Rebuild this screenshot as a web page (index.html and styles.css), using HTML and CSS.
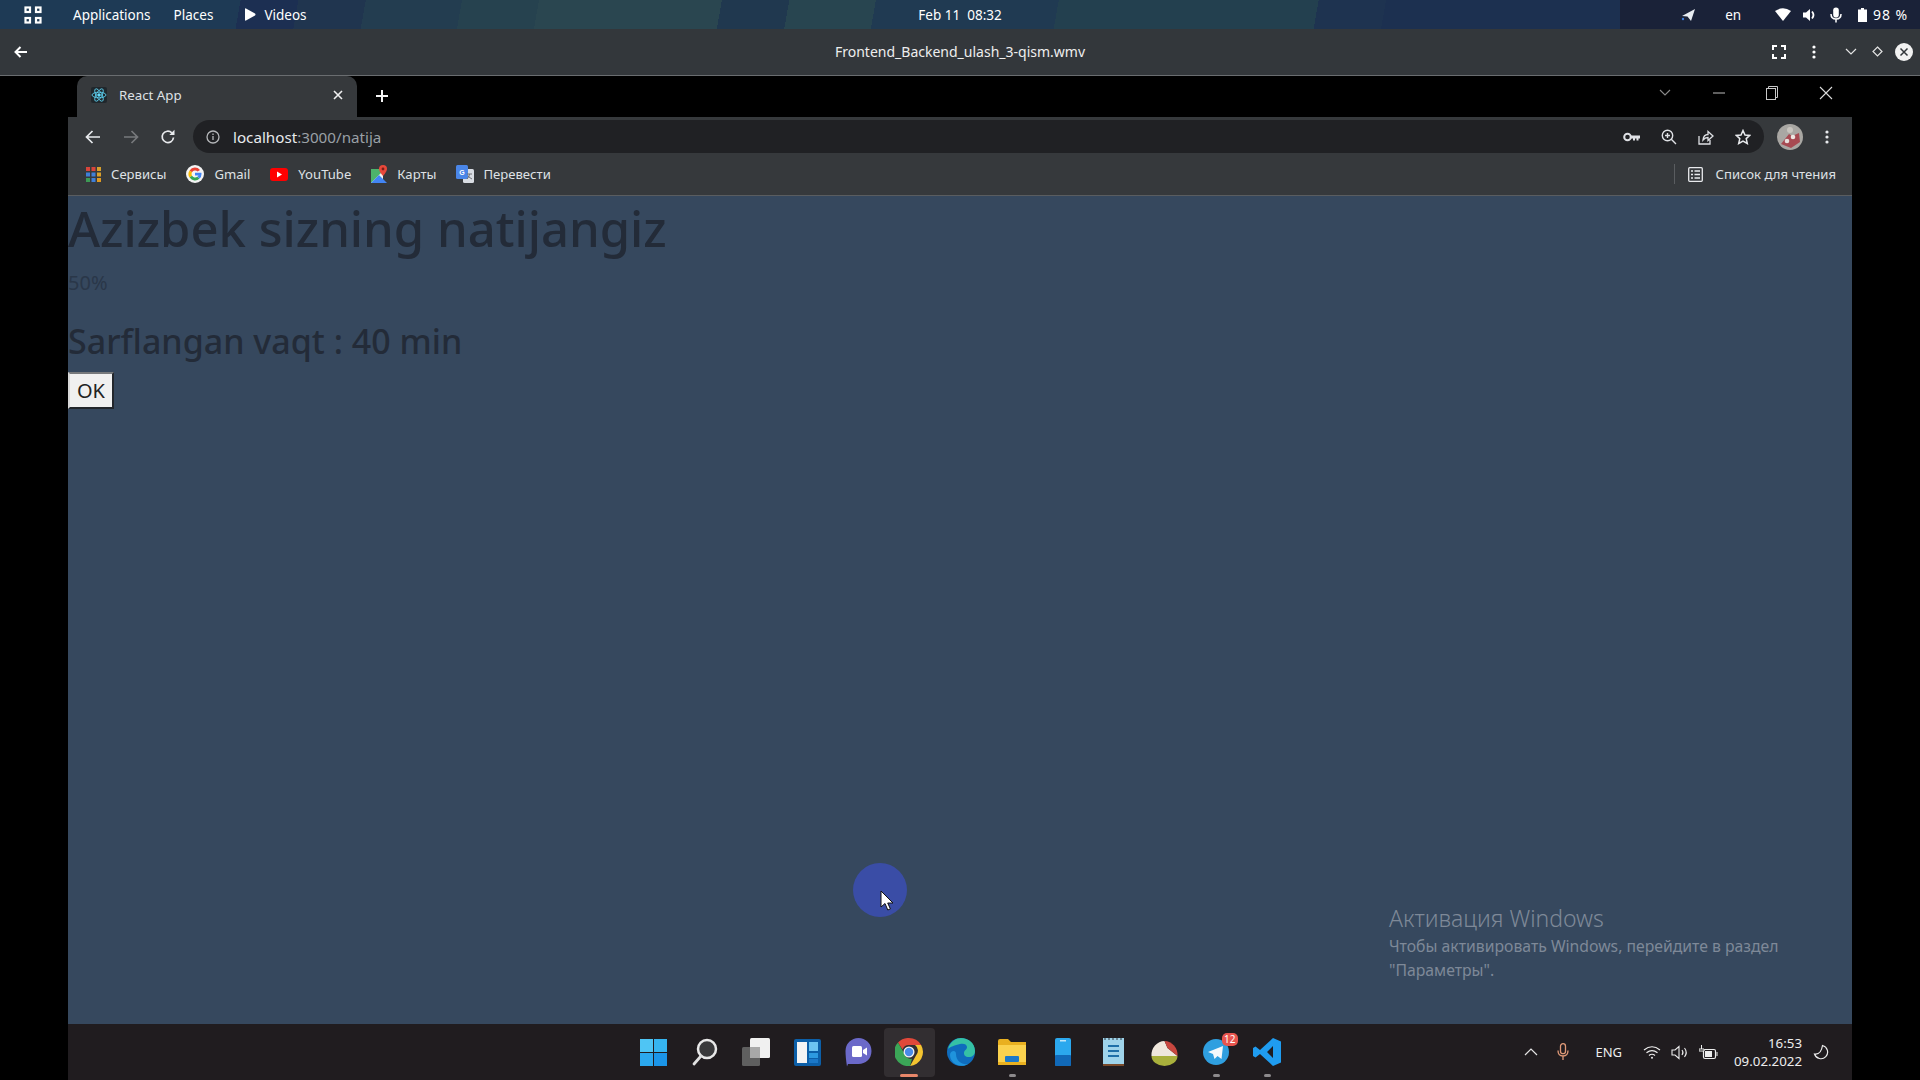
FILE: index.html
```html
<!DOCTYPE html>
<html lang="en">

<head>
    <meta charset="UTF-8">
    <meta name="viewport" content="width=device-width, initial-scale=1.0">
    <title>React App</title>
    <link rel="stylesheet" href="styles.css">
</head>

<body>
    <!-- gnome top bar -->
    <div class="topbar">
        <div class="top-left">
            <svg class="top-grid" width="18" height="18" viewBox="0 0 18 18" fill="none" stroke="#fff" stroke-width="2.2">
                <rect x="1.5" y="1.5" width="4.5" height="4.5" /><rect x="12" y="1.5" width="4.5" height="4.5" />
                <rect x="1.5" y="12" width="4.5" height="4.5" /><rect x="12" y="12" width="4.5" height="4.5" />
            </svg>
            <span class="top-apps">Applications</span>
            <span class="top-places">Places</span>
            <svg class="top-play" width="12" height="13" viewBox="0 0 12 13"><path d="M1 1 Q1 0 2 .4 L11 5.6 Q12 6.5 11 7.4 L2 12.6 Q1 13 1 12Z" fill="#fff" /></svg>
            <span>Videos</span>
        </div>
        <div class="top-date">Feb 11&nbsp; 08:32</div>
        <div class="top-right">
            <svg width="16" height="14" viewBox="0 0 16 14"><path d="M15 1 L11 13 L7.5 8.5 L2 8 Z" fill="#e8edf2" /><circle cx="3" cy="11" r="1.2" fill="#3d7bd8" /></svg>
            <span class="top-lang">en</span>
            <svg class="top-wifi" width="16" height="13" viewBox="0 0 16 13"><path d="M0 3 Q8 -2.5 16 3 L8 13Z" fill="#fff" /></svg>
            <svg class="top-vol" width="15" height="14" viewBox="0 0 15 14"><path d="M1 4.5h3L8 1v12L4 9.5H1Z" fill="#fff" /><path d="M10 3.5Q13 7 10 10.5" fill="none" stroke="#fff" stroke-width="1.8" /></svg>
            <svg class="top-mic" width="12" height="16" viewBox="0 0 12 16"><rect x="3.2" y="0.5" width="5.6" height="10" rx="2.8" fill="#fff" /><path d="M1 7q0 5 5 5t5-5M6 12v3.5" fill="none" stroke="#fff" stroke-width="1.5" /></svg>
            <svg class="top-batt" width="9" height="14" viewBox="0 0 9 14"><path d="M3 0h3v1.5h3V14H0V1.5h3Z" fill="#fff" /></svg>
            <span class="top-pct">98 %</span>
        </div>
    </div>

    <!-- video player header -->
    <div class="player-head">
        <svg class="player-back" width="14" height="12" viewBox="0 0 14 12" fill="none" stroke="#fff" stroke-width="2"><path d="M13 6H2M6.5 1 1.5 6l5 5" /></svg>
        <div class="player-title">Frontend_Backend_ulash_3-qism.wmv</div>
        <div class="player-tools">
            <svg class="tool-full" width="14" height="14" viewBox="0 0 14 14" fill="none" stroke="#fff" stroke-width="2"><path d="M1 5V1h4M9 1h4v4M13 9v4H9M5 13H1V9" /></svg>
            <svg class="tool-dots" width="4" height="14" viewBox="0 0 4 14" fill="#fff"><circle cx="2" cy="2" r="1.6" /><circle cx="2" cy="7" r="1.6" /><circle cx="2" cy="12" r="1.6" /></svg>
            <svg class="tool-down" width="12" height="8" viewBox="0 0 12 8" fill="none" stroke="#e4e4e4" stroke-width="1.2"><path d="M1 1l5 5 5-5" /></svg>
            <svg class="tool-diamond" width="11" height="11" viewBox="0 0 11 11" fill="none" stroke="#e4e4e4" stroke-width="1.2"><path d="M5.500 1 10 5.500 5.500 10 1 5.500Z" /></svg>
            <svg class="tool-close" width="18" height="18" viewBox="0 0 18 18"><circle cx="9" cy="9" r="9" fill="#f2f2f2" /><path d="M5.500 5.500l7 7M12.500 5.500l-7 7" stroke="#33373b" stroke-width="1.500" /></svg>
        </div>
    </div>

    <!-- the recorded windows screen -->
    <div class="stage">
        <div class="screen">
            <div class="tabstrip">
                <div class="tab">
                    <svg class="favicon" width="16" height="16" viewBox="0 0 16 16" fill="none" stroke="#61dafb" stroke-width=".8">
                        <rect width="16" height="16" rx="2" fill="#20272c" stroke="none" />
                        <ellipse cx="8" cy="8" rx="7" ry="2.800" /><ellipse cx="8" cy="8" rx="7" ry="2.800" transform="rotate(60 8 8)" /><ellipse cx="8" cy="8" rx="7" ry="2.800" transform="rotate(120 8 8)" />
                        <circle cx="8" cy="8" r="1.300" fill="#61dafb" />
                    </svg>
                    <span class="tab-title">React App</span>
                    <svg class="tab-x" width="10" height="10" viewBox="0 0 10 10" stroke="#f0f0f0" stroke-width="1.600"><path d="M1 1l8 8M9 1l-8 8" /></svg>
                </div>
                <svg class="tab-plus" width="14" height="14" viewBox="0 0 14 14" stroke="#f4f4f4" stroke-width="2"><path d="M7 1v12M1 7h12" /></svg>
                <div class="win-btns">
                    <svg width="12" height="8" viewBox="0 0 12 8" fill="none" stroke="#8a8a8a" stroke-width="1.100"><path d="M1 1l5 5 5-5" /></svg>
                    <svg class="win-min" width="12" height="2" viewBox="0 0 12 2"><path d="M0 1h12" stroke="#bdbdbd" /></svg>
                    <svg class="win-max" width="12" height="14" viewBox="0 0 12 14" fill="none" stroke="#c8c8c8"><rect x=".5" y="2.500" width="9" height="11" /><path d="M2.500 2.500V.5h9v11h-2" /></svg>
                    <svg class="win-close" width="14" height="14" viewBox="0 0 14 14" stroke="#dcdcdc" stroke-width="1.100"><path d="M1 1l12 12M13 1L1 13" /></svg>
                </div>
            </div>

            <div class="toolbar">
                <svg class="nav-back" width="16" height="14" viewBox="0 0 16 14" fill="none" stroke="#e8eaed" stroke-width="1.700"><path d="M15 7H2M7.500 1 1.500 7l6 6" /></svg>
                <svg class="nav-fwd" width="16" height="14" viewBox="0 0 16 14" fill="none" stroke="#77797c" stroke-width="1.700"><path d="M1 7h13M8.500 1l6 6-6 6" /></svg>
                <svg class="nav-reload" width="16" height="16" viewBox="0 0 16 16" fill="none" stroke="#e8eaed" stroke-width="1.700"><path d="M13.500 8.500A5.700 5.700 0 1 1 11.800 3.800" /><path d="M14.500 .8v5.200H9.300Z" fill="#e8eaed" stroke="none" /></svg>
                <div class="omnibox">
                    <svg class="omni-info" width="14" height="14" viewBox="0 0 14 14" fill="none" stroke="#b5b7ba" stroke-width="1.300"><circle cx="7" cy="7" r="6" /><path d="M7 6v4M7 3.500v1.500" /></svg>
                    <span class="omni-host">localhost</span><span class="omni-path">:3000/natija</span>
                    <div class="omni-icons">
                        <svg width="17" height="10" viewBox="0 0 17 10"><circle cx="4.500" cy="5" r="3.300" fill="none" stroke="#dfe1e5" stroke-width="2" /><path d="M8 3.500h9v3h-1.500v2h-2v-2h-1.500v2h-2v-2H8Z" fill="#dfe1e5" /></svg>
                        <svg width="16" height="16" viewBox="0 0 16 16" fill="none" stroke="#dfe1e5" stroke-width="1.400"><circle cx="6.500" cy="6.500" r="5.200" /><path d="M10.300 10.300 15 15M6.500 4v5M4 6.500h5" /></svg>
                        <svg width="16" height="16" viewBox="0 0 16 16" fill="none" stroke="#dfe1e5" stroke-width="1.300"><path d="M1 7v8h11v-4M5 11Q5.500 5.500 10 5.500V2.500l5 4.500-5 4.500v-3Q7 8.500 5 11Z" /></svg>
                        <svg width="16" height="16" viewBox="0 0 16 16" fill="none" stroke="#e8eaed" stroke-width="1.500"><path d="M8 1.500l2 4.500 4.800.4-3.600 3.200 1.100 4.800L8 12l-4.300 2.400 1.100-4.800L1.200 6.400 6 6Z" /></svg>
                    </div>
                </div>
                <svg class="avatar" width="26" height="26" viewBox="0 0 26 26"><circle cx="13" cy="13" r="13" fill="#a9a7a3" /><path d="M4 20l8-10 3 2 7-3 1 9-9 6Z" fill="#a74a52" /><circle cx="10" cy="17" r="2.300" fill="#e8dfdc" /><circle cx="16" cy="13" r="2.300" fill="#ede6e2" /><circle cx="13" cy="6" r="3" fill="#c9c5bf" /></svg>
                <svg class="menu-dots" width="4" height="14" viewBox="0 0 4 14" fill="#e8eaed"><circle cx="2" cy="2" r="1.600" /><circle cx="2" cy="7" r="1.600" /><circle cx="2" cy="12" r="1.600" /></svg>
            </div>

            <div class="bookmarks">
                <svg class="bm-icon" width="15" height="15" viewBox="0 0 15 15">
                    <rect width="4" height="4" fill="#d8453b" /><rect x="5.500" width="4" height="4" fill="#d8453b" /><rect x="11" width="4" height="4" fill="#d8a02c" />
                    <rect y="5.500" width="4" height="4" fill="#3f7fd8" /><rect x="5.500" y="5.500" width="4" height="4" fill="#3f7fd8" /><rect x="11" y="5.500" width="4" height="4" fill="#d8a02c" />
                    <rect y="11" width="4" height="4" fill="#3d9a55" /><rect x="5.500" y="11" width="4" height="4" fill="#3f7fd8" /><rect x="11" y="11" width="4" height="4" fill="#e09a22" />
                </svg>
                <span class="bm-text bm-services">Сервисы</span>
                <svg class="bm-icon" width="18" height="18" viewBox="0 0 18 18">
                    <circle cx="9" cy="9" r="9" fill="#f4f4f4" />
                    <path d="M14 5A6.500 6.500 0 0 0 3.600 5.400L6 7.200A3.600 3.600 0 0 1 11.600 6.400Z" fill="#ea4335" />
                    <path d="M3.600 5.400a6.500 6.500 0 0 0 0 7.200L6 10.800a3.600 3.600 0 0 1 0-3.600Z" fill="#fbbc05" />
                    <path d="M3.600 12.600A6.500 6.500 0 0 0 13.600 13.600L11.300 11.800A3.600 3.600 0 0 1 6 10.800Z" fill="#34a853" />
                    <path d="M15.500 9c0-.4 0-.8-.1-1.200H9v2.600h3.500q-.3 1-1.200 1.400l2.300 1.800Q15.500 12 15.500 9Z" fill="#4285f4" />
                </svg>
                <span class="bm-text bm-gmail">Gmail</span>
                <svg class="bm-icon" width="18" height="13" viewBox="0 0 18 13"><rect width="18" height="13" rx="3" fill="#f00" /><path d="M7 3.500v6l5-3Z" fill="#fff" /></svg>
                <span class="bm-text bm-yt">YouTube</span>
                <svg class="bm-icon" width="16" height="18" viewBox="0 0 16 18">
                    <path d="M0 4h12v14H0Z" fill="#4db36b" /><path d="M0 18 12 6v12Z" fill="#f2f2f2" /><path d="M0 18 8 10l8 8Z" fill="#4285f4" />
                    <path d="M12 0a4 4 0 0 1 4 4c0 2.500-4 7-4 7S8 6.500 8 4a4 4 0 0 1 4-4Z" fill="#e8483a" /><circle cx="12" cy="4" r="1.400" fill="#7c1f18" />
                </svg>
                <span class="bm-text bm-maps">Карты</span>
                <svg class="bm-icon" width="18" height="18" viewBox="0 0 18 18"><rect x="7" y="4" width="11" height="14" rx="1.500" fill="#d9dde3" /><rect width="12" height="14" rx="1.500" fill="#4a86e8" /><text class="bm-g" x="3.200" y="10">G</text><path d="M11 9h5M13.500 9q-.3 3-2.500 5M12 11q2 2 4 3" stroke="#6e7177" fill="none" /></svg>
                <span class="bm-text">Перевести</span>
                <div class="reading">
                    <svg width="15" height="15" viewBox="0 0 15 15" fill="none" stroke="#e8eaed" stroke-width="1.300"><rect x=".7" y=".7" width="13.600" height="13.600" rx="1" /><path d="M3 4h2M6.500 4H12M3 7.500h2M6.500 7.500H12M3 11h2M6.500 11H12" /></svg>
                    <span class="bm-text">Список для чтения</span>
                </div>
            </div>

            <div class="page">
                <h1>Azizbek sizning natijangiz</h1>
                <p class="score">50%</p>
                <h2>Sarflangan vaqt : 40 min</h2>
                <button class="ok-btn">OK</button>

                <div class="activate">
                    <div class="activate-title">Активация Windows</div>
                    <div class="activate-text">Чтобы активировать Windows, перейдите в раздел<br>"Параметры".</div>
                </div>

                <div class="click-dot"></div>
                <svg class="pointer" width="14" height="21" viewBox="0 0 14 21"><path d="M1 1v16l4-3.500 2.800 6.500 2.600-1.100L7.700 13H13Z" fill="#fff" stroke="#111" stroke-width="1" /></svg>
            </div>

            <div class="taskbar">
                <div class="task-icons">
                    <div class="task-item">
                        <svg width="27" height="27" viewBox="0 0 27 27"><rect width="13" height="13" fill="#4fc5f4" /><rect x="14" width="13" height="13" fill="#36b5f0" /><rect y="14" width="13" height="13" fill="#2ba8ee" /><rect x="14" y="14" width="13" height="13" fill="#1b95e8" /></svg>
                    </div>
                    <div class="task-item">
                        <svg width="26" height="28" viewBox="0 0 26 28" fill="none"><circle cx="15" cy="11" r="9" stroke="#e9e9e9" stroke-width="2.500" fill="#3a3a3c" /><path d="M9 18 2 26" stroke="#e0e0e0" stroke-width="2.800" stroke-linecap="round" /></svg>
                    </div>
                    <div class="task-item">
                        <svg width="28" height="28" viewBox="0 0 28 28"><rect y="9" width="18" height="19" rx="1.500" fill="#5f5f5f" /><rect x="8" width="20" height="20" rx="1.500" fill="#f0f0f0" /><rect x="8" y="9" width="10" height="11" fill="#a8a8a8" /></svg>
                    </div>
                    <div class="task-item">
                        <svg width="27" height="27" viewBox="0 0 27 27"><rect width="27" height="27" rx="2" fill="#0c5fa8" /><rect x="3" y="3" width="10" height="21" fill="#f4f4f4" /><rect x="15" y="3" width="9" height="9" fill="#6cc4f2" /><rect x="15" y="14" width="9" height="5" fill="#2d9ae0" /><rect x="15" y="20" width="9" height="4" fill="#1b78c8" /></svg>
                    </div>
                    <div class="task-item">
                        <svg width="27" height="30" viewBox="0 0 27 30"><path d="M13.500 1a13 13 0 0 1 13 13c0 8-6 13-13 13H3l-1 2.500Q.5 20 .5 14a13 13 0 0 1 13-13Z" fill="#6b69c9" /><rect x="7" y="9" width="10" height="11" rx="1.500" fill="#fff" /><path d="M18 13l4-2.500v8L18 16Z" fill="#fff" /></svg>
                    </div>
                    <div class="task-item task-active">
                        <svg width="28" height="28" viewBox="0 0 28 28">
                            <path d="M14 0a14 14 0 0 1 12.100 7H14a7 7 0 0 0-6.500 4.400L3 4.500A14 14 0 0 1 14 0Z" fill="#e0483a" />
                            <path d="M26.100 7A14 14 0 0 1 15 28l6-10.500A7 7 0 0 0 20 7Z" fill="#f4c430" />
                            <path d="M15 28A14 14 0 0 1 3 4.500L9 15a7 7 0 0 0 8 5.800Z" fill="#3ba657" />
                            <circle cx="14" cy="14" r="5.500" fill="#f2f2f2" /><circle cx="14" cy="14" r="4.200" fill="#4a8be8" />
                        </svg>
                    </div>
                    <div class="task-item">
                        <svg width="28" height="28" viewBox="0 0 28 28"><circle cx="14" cy="14" r="14" fill="#0f6cbd" /><path d="M1 11C3 3 10 0 14 0c7 0 14 5 14 13 0 4-3 6-6 6-4 0-5-2-5-4 0-3 3-3 3-6C20 6 16 5 13 6 8 7 3 9 1 11Z" fill="#35c1a5" /><path d="M9 16c0 7 6 11 12 10-8 5-18-1-18-9 0-4 6-6 6-1Z" fill="#1f93dc" /></svg>
                    </div>
                    <div class="task-item task-open">
                        <svg width="28" height="26" viewBox="0 0 28 26"><path d="M0 2Q0 0 2 0h8l3 3h15v23H0Z" fill="#e9b020" /><rect y="6" width="28" height="20" fill="#fbd24e" /><rect x="7" y="17" width="14" height="6" rx="1" fill="#1b78c8" /><rect y="23" width="28" height="3" fill="#e9b020" /></svg>
                    </div>
                    <div class="task-item">
                        <svg width="16" height="28" viewBox="0 0 16 28"><rect width="16" height="28" rx="2" fill="#2ba8ee" /><rect y="17" width="16" height="11" rx="1" fill="#1169b8" /><rect x="5" y="2" width="6" height="1.500" fill="#bfe6fa" /></svg>
                    </div>
                    <div class="task-item">
                        <svg width="21" height="28" viewBox="0 0 21 28"><rect width="21" height="26" fill="#9fd3ea" /><rect y="26" width="21" height="2" fill="#7a4a2a" /><path d="M5 8h11M5 13h11M5 18h11" stroke="#1f6fa8" stroke-width="2" /><path d="M2 0v2M6 0v2M10 0v2M14 0v2M18 0v2" stroke="#2a3a44" /></svg>
                    </div>
                    <div class="task-item">
                        <svg width="27" height="28" viewBox="0 0 27 28"><path d="M.5 18h26a13 10 0 0 1-26 0Z" fill="#a9b03c" /><path d="M.5 18a13 14 0 0 1 13-15l3 7 10 8Z" fill="#efe7dc" /><path d="M13.500 3a13 14 0 0 1 13 15l-10-8Z" fill="#c8473f" /></svg>
                    </div>
                    <div class="task-item task-open">
                        <svg width="26" height="26" viewBox="0 0 26 26"><circle cx="13" cy="13" r="13" fill="#2f9fe0" /><path d="M20 7 5 13l5 2 1.500 5 3-3 4 3Z" fill="#f4f8fb" /></svg>
                        <span class="task-badge">12</span>
                    </div>
                    <div class="task-item task-open">
                        <svg width="28" height="28" viewBox="0 0 28 28"><path d="M20 0l8 3.500v21L20 28 7 16l-4.500 3.500L0 18v-8l2.500-1.500L7 12Zm0 8-6 6 6 6Z" fill="#1f9cf0" /></svg>
                    </div>
                </div>
                <div class="tray">
                    <svg class="tray-up" width="14" height="8" viewBox="0 0 14 8" fill="none" stroke="#e4e4e4" stroke-width="1.200"><path d="M1 7l6-6 6 6" /></svg>
                    <svg class="tray-mic" width="12" height="18" viewBox="0 0 12 18" fill="none" stroke="#e09a78" stroke-width="1.300"><rect x="3.500" y=".7" width="5" height="10" rx="2.500" /><path d="M1 7.500q0 5.500 5 5.500t5-5.500M6 13v4" /></svg>
                    <span class="tray-lang">ENG</span>
                    <svg class="tray-wifi" width="18" height="14" viewBox="0 0 18 14" fill="none" stroke="#ededed" stroke-width="1.200"><path d="M1 5q8-6.500 16 0M3.500 7.800q5.500-4.500 11 0M6 10.500q3-2.500 6 0" /><circle cx="9" cy="12.800" r="1" fill="#ededed" stroke="none" /></svg>
                    <svg class="tray-vol" width="19" height="15" viewBox="0 0 19 15" fill="none" stroke="#ededed" stroke-width="1.100"><path d="M1 5h3l4-3.500v12L4 10H1ZM11 5q2 2.500 0 5M13.500 3q3.500 4.500 0 9" /></svg>
                    <svg class="tray-batt" width="19" height="15" viewBox="0 0 19 15"><rect x="4.500" y="4.500" width="12" height="9" rx="1.500" fill="none" stroke="#ededed" stroke-width="1.200" /><rect x="6" y="6" width="7" height="6" fill="#ededed" /><path d="M18 7v4M2.500 0v4M0 4h5v2H0Z" stroke="#ededed" /></svg>
                    <div class="tray-clock">
                        <span>16:53</span>
                        <span>09.02.2022</span>
                    </div>
                    <svg class="tray-moon" width="16" height="16" viewBox="0 0 16 16"><path d="M9.500 1.500A6.700 6.700 0 1 1 1.500 10Q8 11 9.500 1.500Z" fill="none" stroke="#ededed" stroke-width="1.200" /></svg>
                </div>
            </div>
        </div>
    </div>
</body>

</html>
```

FILE: styles.css
```css
* {
    box-sizing: border-box;
}

html,
body {
    margin: 0;
    height: 100%;
}

body {
    display: flex;
    flex-direction: column;
    width: 1920px;
    height: 1080px;
    overflow: hidden;
    background-color: #000;
    font-family: "Noto Sans", "Open Sans", sans-serif;
}

svg {
    display: block;
    flex-shrink: 0;
}

/* top bar */
.topbar {
    display: grid;
    grid-template-columns: 1fr auto 1fr;
    align-items: center;
    height: 29px;
    color: #fff;
    font-size: 13.500px;
    background:
        linear-gradient(90deg, transparent 84.4%, #1a2238 84.4%),
        linear-gradient(100deg, #1e3a55 0 12.500%, #1c2f52 12.500% 15.500%, #20354f 15.500% 19%, #233d50 19% 24%, #26424f 24% 28%, #2a4650 28% 37.500%, #20384f 37.500% 41%, #284550 41% 45.500%, #203a52 45.500% 55%, #23404f 55% 68.500%, #1e3350 68.500% 72%, #1c3050 72% 100%);
}

.top-left,
.top-right {
    display: flex;
    align-items: center;
}

.top-grid {
    margin-left: 24px;
}

.top-apps {
    margin-left: 31px;
}

.top-places {
    margin-left: 23px;
}

.top-play {
    margin-left: 31px;
    margin-right: 8px;
}

.top-right {
    justify-content: flex-end;
    padding-right: 12px;
}

.top-lang {
    margin-left: 29px;
}

.top-wifi {
    margin-left: 34px;
}

.top-vol {
    margin-left: 11px;
}

.top-mic {
    margin-left: 13px;
}

.top-batt {
    margin-left: 16px;
}

.top-pct {
    margin-left: 6px;
    font-size: 14px;
    letter-spacing: .9px;
}

/* player header */
.player-head {
    display: grid;
    grid-template-columns: 1fr auto 1fr;
    align-items: center;
    height: 47px;
    padding: 0 7px 1px;
    border-bottom: 1px solid #6a6d70;
    color: #eeeeee;
    font-size: 14px;
    background-color: #33373b;
}

.player-back {
    margin-left: 7px;
}

.player-tools {
    display: flex;
    align-items: center;
    justify-content: flex-end;
}

.tool-dots {
    margin-left: 26px;
}

.tool-down {
    margin-left: 29px;
}

.tool-diamond {
    margin-left: 15px;
}

.tool-close {
    margin-left: 12px;
}

/* recording */
.stage {
    flex: 1;
    display: flex;
    min-height: 0;
    padding-left: 68px;
}

.screen {
    display: flex;
    flex-direction: column;
    width: 1784px;
}

.tabstrip {
    display: flex;
    align-items: flex-end;
    height: 41px;
    background-color: #000;
}

.tab {
    display: flex;
    align-items: center;
    width: 280px;
    height: 41px;
    margin-left: 9px;
    padding: 0 14px 4px 14px;
    border-radius: 10px 10px 0 0;
    color: #dfe1e5;
    font-size: 13.300px;
    background-color: #36393c;
}

.tab-title {
    margin-left: 12px;
}

.tab-x {
    margin-left: auto;
}

.tab-plus {
    margin-left: 18px;
    margin-bottom: 14px;
}

.win-btns {
    display: flex;
    align-items: center;
    margin-left: auto;
    height: 36px;
    margin-bottom: 6px;
    padding-right: 19px;
}

.win-min {
    margin-left: 42px;
}

.win-max {
    margin-left: 41px;
}

.win-close {
    margin-left: 41px;
}

.toolbar {
    display: flex;
    align-items: center;
    height: 39px;
    background-color: #36393c;
}

.nav-back {
    margin-left: 17px;
}

.nav-fwd {
    margin-left: 22px;
}

.nav-reload {
    margin-left: 21px;
}

.omnibox {
    display: flex;
    align-items: center;
    width: 1571px;
    height: 33px;
    margin-left: 17px;
    padding: 0 13px 0 13px;
    border-radius: 17px;
    font-size: 15.200px;
    background-color: #202124;
}

.omni-info {
    margin-right: 13px;
}

.omni-host {
    color: #e8eaed;
}

.omni-path {
    color: #9aa0a6;
}

.omni-icons {
    display: flex;
    align-items: center;
    gap: 21px;
    margin-left: auto;
}

.avatar {
    margin-left: 13px;
}

.menu-dots {
    margin-left: 22px;
}

.bookmarks {
    display: flex;
    align-items: center;
    height: 40px;
    padding: 0 0 3px 18px;
    border-bottom: 1px solid #5a5d60;
    background-color: #36393c;
}

.bm-icon {
    margin-right: 10px;
}

.bm-text {
    color: #dfe1e5;
    font-size: 13.100px;
}

.bm-services,
.bm-gmail,
.bm-yt {
    margin-right: 20px;
}

.bm-maps {
    margin-right: 19px;
}

.bm-g {
    fill: #fff;
    font-family: "Liberation Sans", sans-serif;
    font-size: 7px;
    font-weight: 700;
}

.reading {
    display: flex;
    align-items: center;
    gap: 13px;
    height: 20px;
    margin-left: auto;
    padding: 0 16px 0 13px;
    border-left: 1px solid #5a5d60;
}

/* page */
.page {
    position: relative;
    flex: 1;
    color: #232b38;
    background-color: #36485e;
}

.page h1 {
    margin: 0;
    font-size: 49px;
    font-weight: 500;
    line-height: 64px;
}

.score {
    margin: 10px 0 0;
    color: #2a3749;
    font-size: 20px;
    line-height: 26px;
}

.page h2 {
    margin: 21px 0 0;
    font-size: 34px;
    font-weight: 500;
    line-height: 48px;
}

.ok-btn {
    display: block;
    width: 46px;
    height: 37px;
    margin-top: 7px;
    padding: 0;
    border: 2px solid #6b6f74;
    border-top-color: #77797c;
    border-left-color: #d8d8d8;
    border-right-color: #22262c;
    border-bottom-color: #22262c;
    color: #222;
    font-family: inherit;
    font-size: 20px;
    background-color: #f0f0f0;
}

.activate {
    position: absolute;
    left: 1321px;
    top: 707px;
    color: #7e8998;
}

.activate-title {
    font-size: 23px;
    font-weight: 300;
    line-height: 30px;
}

.activate-text {
    margin-top: 2px;
    font-size: 15.750px;
    line-height: 23.500px;
}

.click-dot {
    position: absolute;
    left: 785px;
    top: 667px;
    width: 54px;
    height: 54px;
    border-radius: 50%;
    background-color: #3a4da6;
}

.pointer {
    position: absolute;
    left: 812px;
    top: 694px;
}

/* windows taskbar */
.taskbar {
    position: relative;
    display: flex;
    align-items: center;
    justify-content: center;
    height: 56px;
    padding-left: 1px;
    background-color: #201c1f;
}

.task-icons {
    display: flex;
    align-items: center;
}

.task-item {
    position: relative;
    display: flex;
    align-items: center;
    justify-content: center;
    width: 51.100px;
    height: 49px;
}

.task-active {
    border-radius: 4px;
    background-color: #322e31;
}

.task-active::after,
.task-open::after {
    content: "";
    position: absolute;
    bottom: 0;
    left: 50%;
    width: 7px;
    height: 3px;
    margin-left: -3px;
    border-radius: 2px;
    background-color: #8d8a8c;
}

.task-active::after {
    width: 18px;
    margin-left: -9px;
    background-color: #e9876a;
}

.task-badge {
    position: absolute;
    top: 5px;
    right: 4px;
    padding: 0 2px;
    border-radius: 5px;
    color: #fff;
    font-size: 10px;
    line-height: 13px;
    background-color: #e8554e;
}

.tray {
    position: absolute;
    top: 0;
    right: 0;
    display: flex;
    align-items: center;
    height: 56px;
    padding-right: 23px;
    color: #ededed;
}

.tray-mic {
    margin-left: 19px;
}

.tray-lang {
    margin-left: 26px;
    font-size: 13px;
}

.tray-wifi {
    margin-left: 21px;
}

.tray-vol {
    margin-left: 10px;
}

.tray-batt {
    margin-left: 9px;
}

.tray-clock {
    display: flex;
    flex-direction: column;
    align-items: flex-end;
    margin-left: 16px;
    font-size: 13.300px;
    line-height: 18px;
}

.tray-moon {
    margin-left: 11px;
}
```
